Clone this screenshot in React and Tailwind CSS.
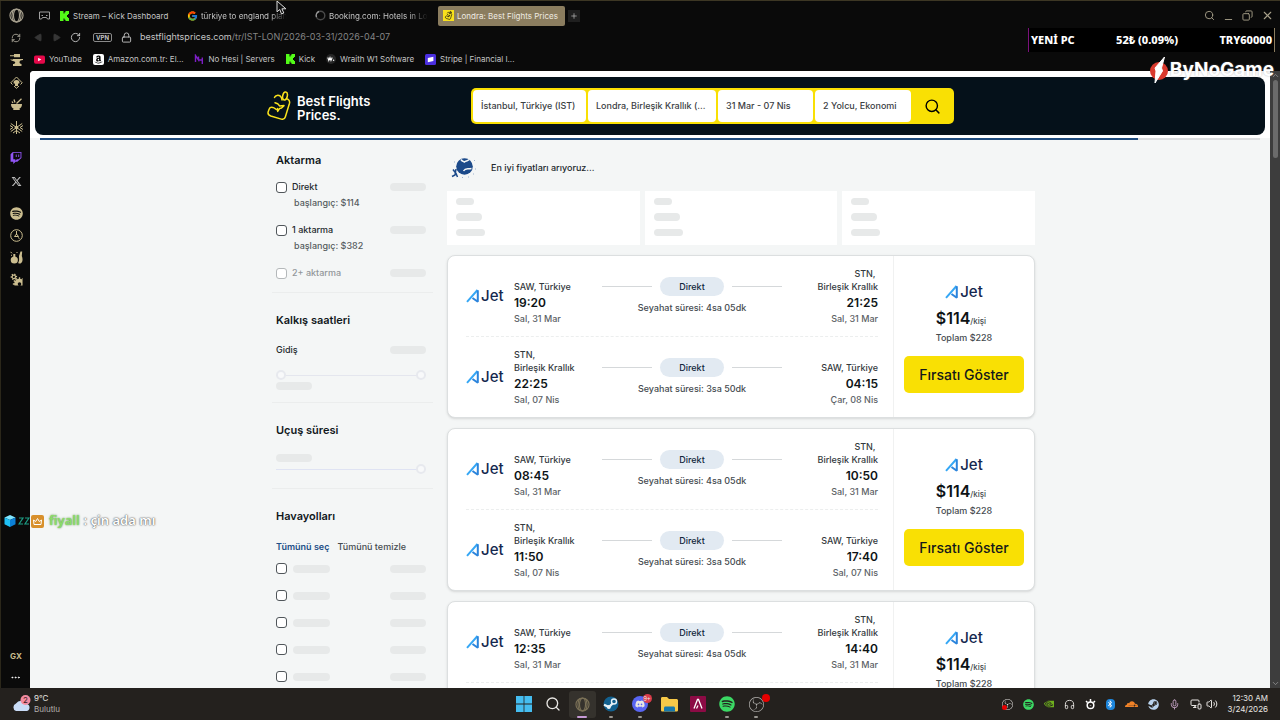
import React from 'react';
import {
  Search,
  RotateCw,
  RefreshCw,
  Lock,
  X,
  Minus,
  Copy,
  Plus,
  Mic,
  Volume2,
  Headphones,
  MonitorSmartphone,
  ChevronUp,
  ChevronDown,
  Play,
  Ellipsis,
} from 'lucide-react';
import {
  FaXTwitter,
  FaSpotify,
  FaTwitch,
  FaSteam,
  FaDiscord,
  FaAmazon,
  FaCloudflare,
  FaBluetoothB,
} from 'react-icons/fa6';
import { FcGoogle } from 'react-icons/fc';
import { SiNvidia, SiObsstudio } from 'react-icons/si';
import { GiGears } from 'react-icons/gi';

const bookmarks = [
  { label: 'YouTube', icon: <YoutubeMark /> },
  { label: 'Amazon.com.tr: El...', icon: <AmazonMark /> },
  { label: 'No Hesi | Servers', icon: <NoHesiMark /> },
  { label: 'Kick', icon: <KickMark /> },
  { label: 'Wraith W1 Software', icon: <WraithMark /> },
  { label: 'Stripe | Financial I...', icon: <StripeMark /> },
];

const tabs = [
  { label: 'Stream – Kick Dashboard', icon: <KickMark /> },
  { label: 'türkiye to england plan', icon: <FcGoogle size={12} />, fade: true },
  { label: 'Booking.com: Hotels in Lo', icon: <Spinner />, fade: true },
  { label: 'Londra: Best Flights Prices', icon: <TagFavicon />, active: true },
];

const stops = [
  { label: 'Direkt', price: 'başlangıç: $114' },
  { label: '1 aktarma', price: 'başlangıç: $382' },
  { label: '2+ aktarma', disabled: true },
];

const saw = ['SAW, Türkiye'];
const stn = ['STN,\u00a0', 'Birleşik Krallık'];

const flights = [
  {
    out: { from: saw, dep: '19:20', depDate: 'Sal, 31 Mar', to: stn, arr: '21:25', arrDate: 'Sal, 31 Mar', time: '4sa 05dk' },
    back: { from: stn, dep: '22:25', depDate: 'Sal, 07 Nis', to: saw, arr: '04:15', arrDate: 'Çar, 08 Nis', time: '3sa 50dk' },
  },
  {
    out: { from: saw, dep: '08:45', depDate: 'Sal, 31 Mar', to: stn, arr: '10:50', arrDate: 'Sal, 31 Mar', time: '4sa 05dk' },
    back: { from: stn, dep: '11:50', depDate: 'Sal, 07 Nis', to: saw, arr: '17:40', arrDate: 'Sal, 07 Nis', time: '3sa 50dk' },
  },
  {
    out: { from: saw, dep: '12:35', depDate: 'Sal, 31 Mar', to: stn, arr: '14:40', arrDate: 'Sal, 31 Mar', time: '4sa 05dk' },
    back: { from: stn, dep: '11:50', depDate: 'Sal, 07 Nis', to: saw, arr: '17:40', arrDate: 'Sal, 07 Nis', time: '3sa 50dk' },
  },
];

/* ---------- small marks ---------- */

function KickMark() {
  return (
    <svg width="9" height="10" viewBox="0 0 9 10" fill="#53fc18">
      <path d="M0 0h3.500v2.500h1V1.200h1V0H9v3H8v1H7v2h1v1h1v3H5.500V8.800h-1V7.500h-1V10H0z" />
    </svg>
  );
}

function YoutubeMark() {
  return (
    <svg width="11" height="9" viewBox="0 0 12 9">
      <rect width="12" height="9" rx="2" fill="#e5094a" />
      <path d="M4.500 2.500v4L8 4.500z" fill="#fff" />
    </svg>
  );
}

function AmazonMark() {
  return (
    <span className="flex size-[11px] items-center justify-center rounded-[2px] bg-white text-black">
      <FaAmazon size={9} />
    </span>
  );
}

function NoHesiMark() {
  return (
    <svg width="10" height="11" viewBox="0 0 10 11" fill="none" stroke="#7c1fc4" strokeWidth="1.400">
      <path d="M1.500 8V1.500l3 4.500V2.500M4.500 6h3.800V3.500M8.300 6v4" />
    </svg>
  );
}

function WraithMark() {
  return (
    <svg width="10" height="10" viewBox="0 0 10 10">
      <circle cx="5" cy="5" r="5" fill="#262626" />
      <path d="M1.800 3.500l1 3 1.200-3 1 3 1.200-3" fill="none" stroke="#fff" strokeWidth="1.100" />
      <circle cx="7.600" cy="6.300" r=".7" fill="#fff" />
    </svg>
  );
}

function StripeMark() {
  return (
    <svg width="11" height="11" viewBox="0 0 11 11">
      <rect width="11" height="11" rx="1.500" fill="#4b2fe0" />
      <path d="M2.800 4l5.600-1.200v4.300L2.800 8.300z" fill="#fff" />
    </svg>
  );
}

function Spinner() {
  return (
    <svg width="11" height="11" viewBox="0 0 11 11" fill="none" strokeWidth="1.400">
      <circle cx="5.500" cy="5.500" r="4.300" stroke="#4a4a4a" />
      <path d="M1.500 7A4.300 4.300 0 0 1 4 1.500" stroke="#999" />
    </svg>
  );
}

function TagShape() {
  return (
    <g fill="none" strokeLinecap="round" strokeLinejoin="round">
      <ellipse cx="18" cy="5" rx="2.300" ry="4" transform="rotate(12 18 5)" />
      <path d="M7.500 6.500C8.500 4 11.500 3.800 13.300 5.200c1 .8 1.500 2.200 1.700 3.800M20.500 8C22.300 9 23 10.300 22.500 12.200L18.300 26c-.6 2-2 2.700-4 2.100L3.800 25C1.600 24.200.6 22.600 1.200 20.700l.9-2.500c.6-1.700 1.900-2.200 3.700-1.800 1.500.4 2.700 1.500 4 2.200" />
      <path d="M8 11.800l2.700 1 2 2.200 4.300-.4-2.500 2.400-1.800.4-2 3-.1-2.900" />
    </g>
  );
}

function TagFavicon() {
  return (
    <svg width="11" height="11" viewBox="0 0 32 32" stroke="#111" strokeWidth="2.200">
      <rect width="32" height="32" fill="#f9e11c" stroke="none" />
      <g transform="translate(6 3) scale(.86)">
        <TagShape />
      </g>
    </svg>
  );
}

function OperaMark({ size, color }) {
  return (
    <svg width={size} height={size} viewBox="0 0 16 16" fill="none" stroke={color} strokeWidth="1.200">
      <circle cx="8" cy="8" r="7" />
      <ellipse cx="8" cy="8" rx="3.200" ry="6.800" />
      <path d="M5 1.800C2.500 5 2.500 11 5 14.200M11 1.800c2.500 3.200 2.500 9.200 0 12.400" />
    </svg>
  );
}

function AJetLogo() {
  return (
    <span className="flex h-4 items-center gap-px text-[#14284f]">
      <svg width="14" height="14" viewBox="0 0 14 14" fill="none">
        <path d="M1 12.800L11.500 1" stroke="#35a7f5" strokeWidth="2" />
        <path d="M11.800 1.200v11.600L6.500 9" stroke="#2b84dc" strokeWidth="2" strokeLinejoin="bevel" />
      </svg>
      <span className="text-[15px] leading-4 font-medium">Jet</span>
    </span>
  );
}

function Globe() {
  return (
    <svg width="26" height="24" viewBox="0 0 26 24">
      <circle cx="13.500" cy="10.500" r="8.300" fill="#1c4a8a" />
      <path d="M10 3.500c1.500 2.500 2.500 1.500 3.500 2.500 1.500-1.500 3-.5 4.500-2.500M12.500 15c2-3.500 4-1.500 8-2.500" fill="none" stroke="#f4f6f6" strokeWidth="1.500" />
      <path d="M1 20.500l3-1.500 1-6M2 13.500l3 4 1.500 3.500" fill="none" stroke="#1c4a8a" strokeWidth="1.500" />
      <path d="M3 6h1M23 4.500h1M24 13h1M22 18h1M17 21h1M11 21.500h1" stroke="#9db3d0" strokeWidth="1.200" />
    </svg>
  );
}

function AnvilIcon() {
  return (
    <svg width="13" height="13" viewBox="0 0 13 13" fill="currentColor">
      <path d="M4 0h6v3.200H4zM0 1.200h4v1H0zM0 5.500h3V5h10v1c-2 0-3.500.8-3.500 2.200 0 1 .8 1.600 2 1.800v2H3v-2c1.500-.2 2.200-.8 2.200-1.600C5.200 7.300 3 7.600 0 5.500z" />
    </svg>
  );
}

function MushroomIcon() {
  return (
    <svg width="13" height="13" viewBox="0 0 13 13" fill="none" stroke="currentColor">
      <path d="M2.500 8.500L.8 6.800 6.500 1l5.700 5.800-1.700 1.700M4 10l2.500 2.300L9 10" />
      <path d="M3.500 7.200a3 3.200 0 0 1 6 0L8 7.800V10H5V7.800z" fill="currentColor" stroke="none" />
    </svg>
  );
}

function MortarIcon() {
  return (
    <svg width="13" height="13" viewBox="0 0 13 13" fill="currentColor">
      <path d="M1 6h11c0 2.500-1 4-2.700 4.800l.7 1.200H3l.7-1.200C2 10 1 8.500 1 6z" />
      <path d="M6.500 5.500L11.500.8M3 5l-1-1.500M5 4.500L4 1.500" stroke="currentColor" strokeWidth="1.300" />
    </svg>
  );
}

function SpiderIcon() {
  return (
    <svg width="13" height="13" viewBox="0 0 13 13" fill="none" stroke="currentColor">
      <path d="M6.500 0v13M.8 2.500l5.700 4 5.700-4M.8 10.500l5.700-4 5.700 4M0 4.500l3 2-3 2M13 4.500l-3 2 3 2M3 12l3.500-2.500L10 12" />
      <circle cx="6.500" cy="6.500" r="1.800" fill="currentColor" stroke="none" />
    </svg>
  );
}

function PotionsIcon() {
  return (
    <svg width="13" height="13" viewBox="0 0 13 13" fill="currentColor">
      <circle cx="4.300" cy="9" r="3.600" />
      <path d="M3.300 3h2v4h-2zM9 5l1.500-4.500h1.700L11.800 5c1.300 3 1 6.500-1.300 7.500-1 .3-1.800 0-2.300-.6C9.500 9.500 9 7.500 9 5z" />
      <path d="M.5.800l1.500 1.500M1 4l1 .5M7.500 1L6.500 2" stroke="currentColor" />
    </svg>
  );
}

/* ---------- browser chrome ---------- */

const Rail = () => (
  <aside className="flex w-[30px] shrink-0 flex-col items-center border-l border-[#2b271a] pt-[3px] pl-px text-[#cbbd8f]">
    <nav className="flex flex-col items-center">
      <button aria-label="Opera" className="flex h-[23px] items-center"><OperaMark size={15} color="#a9a290" /></button>
      <button aria-label="Sync" className="flex h-[22px] items-center text-[#b5b0a2]"><RefreshCw size={10} /></button>
      <button aria-label="Mods" className="flex h-[22px] items-center"><AnvilIcon /></button>
      <button aria-label="Mushroom" className="flex h-[22px] items-center"><MushroomIcon /></button>
      <button aria-label="Mortar" className="flex h-[23px] items-center"><MortarIcon /></button>
      <button aria-label="Spider" className="flex h-[22px] items-center"><SpiderIcon /></button>
    </nav>
    <nav className="mt-2 flex flex-col items-center">
      <button aria-label="Twitch" className="flex h-[24px] items-center text-[#9155f5]"><FaTwitch size={12} /></button>
      <button aria-label="X" className="flex h-[22px] items-center text-[#bdbdbd]"><FaXTwitter size={11} /></button>
    </nav>
    <nav className="mt-2.5 flex flex-col items-center">
      <button aria-label="Spotify" className="flex h-[22px] items-center"><FaSpotify size={13} /></button>
      <button aria-label="History" className="flex h-[22px] items-center">
        <svg width="13" height="13" viewBox="0 0 13 13" fill="none" stroke="currentColor">
          <circle cx="6.500" cy="6.500" r="5.800" />
          <path d="M6.500 2v4M4.500 7.500l2-2.500 2 2.500zM8 8.500l1.500 1" />
        </svg>
      </button>
      <button aria-label="Potions" className="flex h-[22px] items-center"><PotionsIcon /></button>
      <button aria-label="Settings" className="flex h-[22px] items-center"><GiGears size={13} /></button>
    </nav>
    <div className="mt-auto flex flex-col items-center">
      <button className="h-[22px] text-[8px] font-bold">GX</button>
      <button aria-label="More" className="flex h-[21px] items-center text-white"><Ellipsis size={11} /></button>
    </div>
  </aside>
);

const TabRow = () => (
  <div className="flex h-[26px] items-center pt-[3px] pl-[5px] text-[#c4c4c4]">
    <svg className="w-[19px]" width="12" height="10" viewBox="0 0 12 10" fill="none" stroke="#a0a0a0">
      <path d="M1 1h10v7H9L8 6.500H4L3 8H1zM3 4.500h1.500M7.500 4.500H9" />
    </svg>
    <div className="flex gap-px">
      {tabs.map((tab) => (
        <button
          key={tab.label}
          className={`flex h-5 w-[127px] items-center gap-[3px] rounded-[2px] pl-[5px] text-left whitespace-nowrap ${
            tab.active ? 'bg-[#8b7d5f] text-[#efebe2]' : ''
          }`}
        >
          <span className="flex w-[11px] shrink-0 justify-center">{tab.icon}</span>
          <span className={tab.fade ? 'mask-r-from-80%' : ''}>{tab.label}</span>
        </button>
      ))}
    </div>
    <button aria-label="New tab" className="ml-[3px] flex size-3 items-center justify-center bg-[#1f1f1f]">
      <Plus size={8} />
    </button>
    <div className="ml-auto flex items-center gap-2 pr-[6px] text-[#a8a18a]">
      <button aria-label="Search tabs"><Search size={11} /></button>
      <button aria-label="Minimize" className="pt-2"><Minus size={11} /></button>
      <button aria-label="Restore"><Copy size={11} className="-scale-x-100" /></button>
      <button aria-label="Close"><X size={13} /></button>
    </div>
  </div>
);

const AddressRow = () => (
  <div className="flex h-[20px] items-center pl-1 text-[#c4c4c4]">
    <button aria-label="Back" className="w-[18px] text-[#363636]"><Play size={9} className="-scale-x-100 fill-current" /></button>
    <button aria-label="Forward" className="w-[18px] text-[#363636]"><Play size={9} className="fill-current" /></button>
    <button aria-label="Reload" className="w-[23px]"><RotateCw size={11} /></button>
    <span className="flex h-[9px] w-[19px] items-center justify-center rounded-[2px] border border-[#8a8a8a] text-[6px] font-bold">VPN</span>
    <Lock size={11} className="mr-2 ml-[9px]" />
    <button className="text-[9px]">
      bestflightsprices.com<span className="text-[#858585]">/tr/IST-LON/2026-03-31/2026-04-07</span>
    </button>
  </div>
);

const BookmarkRow = () => (
  <nav className="flex h-6 items-center gap-[11px] pl-1 text-[#c4c4c4]">
    {bookmarks.map((b) => (
      <a key={b.label} href="#" className="flex items-center gap-1 whitespace-nowrap">
        {b.icon}
        {b.label}
      </a>
    ))}
  </nav>
);

/* ---------- web page ---------- */

const Bone = ({ className }) => (
  <span className={`block rounded-full bg-[#e7e9e9] ${className}`} />
);

const SearchBar = () => (
  <form className="flex h-9 w-[483px] items-stretch gap-[2px] rounded-[5px] bg-[#f9e004] p-[2px] text-[9px] font-medium text-[#3b4043]">
    <input aria-label="Nereden" defaultValue="İstanbul, Türkiye (IST)" className="w-[113px] rounded-[4px] bg-white px-2" />
    <input aria-label="Nereye" defaultValue="Londra, Birleşik Krallık (..." className="w-[128px] rounded-[4px] bg-white px-2" />
    <button type="button" className="w-[95px] rounded-[4px] bg-white px-2 text-left">31 Mar - 07 Nis</button>
    <button type="button" className="w-[96px] rounded-[4px] bg-white px-2 text-left whitespace-nowrap">2 Yolcu, Ekonomi</button>
    <button type="button" aria-label="Ara" className="flex flex-1 items-center justify-center text-black">
      <Search size={17} />
    </button>
  </form>
);

const SiteHeader = () => (
  <header className="bg-white px-[5px] pt-1.5 pb-[3px]">
    <div className="flex h-[58px] items-center rounded-lg bg-[#05111a]">
      <div className="mx-auto flex w-full max-w-[770px] items-center">
        <a href="#" className="flex w-[206px] items-center gap-1.5 pl-0.5">
          <svg width="24" height="30" viewBox="0 0 24 30" stroke="#f9e11c" strokeWidth="1.500">
            <TagShape />
          </svg>
          <span className="pt-1 text-[13px] leading-[14px] font-semibold text-white">
            Best Flights
            <br />
            Prices.
          </span>
        </a>
        <SearchBar />
      </div>
    </div>
  </header>
);

const checkboxClass =
  'size-[11px] shrink-0 appearance-none rounded-[3px] border border-[#50565a] bg-white disabled:border-[#b4b8ba]';

const thumbClass =
  'absolute inset-0 h-[10px] w-full appearance-none bg-transparent [&::-webkit-slider-thumb]:size-[10px] [&::-webkit-slider-thumb]:appearance-none [&::-webkit-slider-thumb]:rounded-full [&::-webkit-slider-thumb]:border-2 [&::-webkit-slider-thumb]:border-[#e7e9ee] [&::-webkit-slider-thumb]:bg-[#f8f9fa]';

const Section = ({ title, className, children }) => (
  <section className={`pl-1 ${className}`}>
    <h2 className="text-[11px] leading-4 font-semibold text-[#11181c]">{title}</h2>
    {children}
  </section>
);

const Filters = () => (
  <aside className="ml-[7px] w-[161px] shrink-0 text-[9px] leading-4 font-medium text-[#23292d]">
    <Section title="Aktarma" className="h-[153px] border-b border-[#ebeded] pt-3">
      <ul className="mt-[11px]">
        {stops.map((s, i) => (
          <li key={s.label} className="h-[43px]">
            <div className="flex items-center gap-[5px]">
              <input id={`stop-${i}`} type="checkbox" disabled={s.disabled} className={checkboxClass} />
              <label htmlFor={`stop-${i}`} className={s.disabled ? 'text-[#92979a]' : ''}>{s.label}</label>
              <Bone className="mr-[7px] ml-auto h-2 w-9" />
            </div>
            {s.price && <p className="pl-[18px] text-[#565c60]">{s.price}</p>}
          </li>
        ))}
      </ul>
    </Section>

    <Section title="Kalkış saatleri" className="h-[110px] border-b border-[#ebeded] pt-[19px]">
      <div className="mt-[14px] flex items-center justify-between pr-[7px]">
        <span>Gidiş</span>
        <Bone className="h-2 w-9" />
      </div>
      <div className="relative mt-3 mr-[7px] flex h-[10px] items-center">
        <span className="h-px w-full bg-[#e4e6ee]" />
        <input aria-label="En erken gidiş" type="range" defaultValue={0} className={thumbClass} />
        <input aria-label="En geç gidiş" type="range" defaultValue={100} className={thumbClass} />
      </div>
      <Bone className="mt-0.5 h-2 w-9" />
    </Section>

    <Section title="Uçuş süresi" className="h-[86px] border-b border-[#ebeded] pt-[19px]">
      <Bone className="mt-4 h-2 w-9" />
      <div className="relative mt-0.5 mr-[7px] flex h-[10px] items-center">
        <span className="h-px w-full bg-[#dfe3f3]" />
        <input aria-label="En uzun uçuş" type="range" defaultValue={100} className={thumbClass} />
      </div>
    </Section>

    <Section title="Havayolları" className="pt-[19px]">
      <div className="mt-[15px] flex gap-2">
        <button className="font-semibold text-[#224f87]">Tümünü seç</button>
        <button className="text-[#454b4f]">Tümünü temizle</button>
      </div>
      <ul>
        {[1, 2, 3, 4, 5].map((n) => (
          <li key={n} className="flex h-[27px] items-center">
            <input aria-label={`Havayolu ${n}`} type="checkbox" className={checkboxClass} />
            <Bone className="ml-1.5 h-2 w-[37px]" />
            <Bone className="mr-[7px] ml-auto h-2 w-9" />
          </li>
        ))}
      </ul>
    </Section>
  </aside>
);

const Stop = ({ place, time, date, right }) => (
  <div className={`flex flex-col justify-end text-[9px] leading-[13px] font-medium text-[#33393d] ${right ? 'w-[88px] items-end' : 'w-[80px]'}`}>
    {place.map((line) => (
      <span key={line}>{line}</span>
    ))}
    <strong className="text-[12px] leading-[19px] font-semibold text-[#0d1316]">{time}</strong>
    <span className="text-[#5c6266]">{date}</span>
  </div>
);

const Leg = ({ leg }) => (
  <div className="flex h-20 justify-between pt-[10px] pb-[11px]">
    <div className="flex gap-[9px]">
      <div className="flex w-[39px] items-center">
        <AJetLogo />
      </div>
      <Stop place={leg.from} time={leg.dep} date={leg.depDate} />
    </div>
    <div className="flex w-[180px] flex-col items-center justify-end pb-[11px] text-[9px] leading-3 font-medium text-[#454b4f]">
      <div className="flex w-full items-center gap-2">
        <span className="h-px flex-1 bg-[#d5d8da]" />
        <span className="flex h-[19px] w-16 items-center justify-center rounded-full bg-[#e2eaf2] text-[#12273d]">Direkt</span>
        <span className="h-px flex-1 bg-[#d5d8da]" />
      </div>
      <span className="mt-1.5">Seyahat süresi: {leg.time}</span>
    </div>
    <Stop right place={leg.to} time={leg.arr} date={leg.arrDate} />
  </div>
);

const FlightCard = ({ flight }) => (
  <article className="flex rounded-lg border border-[#dcdfe0] bg-white shadow-sm">
    <div className="flex-1 pr-[15px] pl-[18px]">
      <Leg leg={flight.out} />
      <div className="border-t border-dashed border-[#eceeee]" />
      <Leg leg={flight.back} />
    </div>
    <div className="flex w-[141px] flex-col items-center border-l border-[#f0f1f1] px-[10px] pt-7">
      <AJetLogo />
      <div className="mt-2 text-[9px] font-medium text-[#454b4f]">
        <p className="flex items-baseline text-[8px] leading-5">
          <strong className="text-[16px] font-semibold text-[#0d1316]">$114</strong>/kişi
        </p>
        <p className="leading-[14px]">Toplam $228</p>
      </div>
      <button className="mt-[11px] h-[37px] w-full rounded-[5px] bg-[#f9e004] text-[14px] font-medium whitespace-nowrap text-[#14181a]">
        Fırsatı Göster
      </button>
    </div>
  </article>
);

const Results = () => (
  <div className="min-w-0 flex-1">
    <div className="flex h-[51px] items-center gap-[14px] pt-1 pl-1 text-[9px] font-medium text-[#23292d]">
      <Globe />
      <p>En iyi fiyatları arıyoruz...</p>
    </div>
    <div className="grid grid-cols-3 gap-[5px]">
      {[1, 2, 3].map((n) => (
        <div key={n} className="flex h-[54px] flex-col gap-2 bg-white pt-[7px] pl-[9px]">
          <Bone className="h-[7px] w-[18px]" />
          <Bone className="h-2 w-[26px]" />
          <Bone className="h-[7px] w-[29px]" />
        </div>
      ))}
    </div>
    <div className="mt-[10px] flex flex-col gap-[10px]">
      {flights.map((f) => (
        <FlightCard key={f.out.dep} flight={f} />
      ))}
    </div>
  </div>
);

const Scrollbar = () => (
  <div className="flex w-[10px] shrink-0 flex-col items-center bg-[#3d3d3d] text-[#9a9a9a]">
    <ChevronUp size={9} />
    <span className="h-[78px] w-[5px] rounded-full bg-[#6b6b6b]" />
    <ChevronDown size={9} className="mt-auto" />
  </div>
);

/* ---------- stream overlays ---------- */

const Overlays = () => (
  <div className="pointer-events-none">
    <svg className="absolute top-0 left-[276px]" width="11" height="14" viewBox="0 0 11 14">
      <path d="M1 0v10.800l2.800-2.300L5.500 13l2.300-1-1.900-4.200h4z" fill="#111" stroke="#ddd" />
    </svg>

    <div className="absolute top-[27px] right-[5px] flex h-6 w-[247px] items-center justify-between border-x border-r-[#8b7d5f] border-l-[#7b117b] bg-black px-[2px] font-['Noto_Sans'] text-[11px] font-extrabold text-white">
      <span>YENİ PC</span>
      <span>52₺ (0.09%)</span>
      <span>TRY60000</span>
    </div>

    <div className="absolute top-[55px] right-[6px] flex items-center gap-px text-[19px] leading-7 font-bold text-white">
      <svg width="20" height="26" viewBox="0 0 20 26">
        <circle cx="10" cy="14" r="9" fill="#d93a2e" />
        <path d="M15.500 0L6 11l1 3-1 12 7.500-12-1-3z" fill="#fff" stroke="#fff" />
      </svg>
      <span className="text-shadow-[0_0_2px_#8889]">ByNoGame</span>
    </div>

    <div className="absolute top-[511px] left-1 flex h-[18px] items-center font-['Noto_Sans'] text-[13px] font-semibold">
      <svg width="12" height="12" viewBox="0 0 12 12">
        <path d="M6 0l5.500 2.500L6 5 .5 2.500z" fill="#7fe6ff" />
        <path d="M.5 2.500L6 5v7L.5 9.300z" fill="#1fc0f5" />
        <path d="M11.500 2.500L6 5v7l5.500-2.700z" fill="#0b7fd6" />
      </svg>
      <svg className="ml-0.5" width="12" height="10" viewBox="0 0 12 10" fill="none" stroke="#1d9c84" strokeWidth="1.200">
        <path d="M1 2h4L1 8h4M7 2h4L7 8h4" />
      </svg>
      <svg className="ml-px" width="13" height="13" viewBox="0 0 13 13">
        <rect width="13" height="13" rx="2" fill="#d8902c" />
        <path d="M3 9.500L2.500 5l2.200 1.500L6.500 3.500l1.800 3L10.500 5 10 9.500z" fill="none" stroke="#fff" />
      </svg>
      <span className="ml-[5px] text-[#8bdc6a] text-shadow-[0_0_2px_#3f7d2a]">fiyall</span>
      <span className="ml-1 text-white text-shadow-[0_0_2px_#555,0_0_1px_#555]">: çin ada mı</span>
    </div>
  </div>
);

/* ---------- windows taskbar ---------- */

const Task = ({ label, open, active, children }) => (
  <button
    aria-label={label}
    className={`relative flex h-[27px] w-[27px] items-center justify-center rounded-[3px] ${active ? 'bg-[#35322d]' : ''}`}
  >
    {children}
    {(open || active) && (
      <span className={`absolute bottom-0 h-[2px] rounded-full ${active ? 'w-[10px] bg-[#c79ad6]' : 'w-1 bg-[#9a9792]'}`} />
    )}
  </button>
);

const Taskbar = () => (
  <footer className="grid h-8 shrink-0 grid-cols-[1fr_auto_1fr] items-center bg-[#24211e] text-[8px] leading-[11px] text-[#e8e6e3]">
    <div className="flex items-center gap-[3px] pl-3">
      <svg width="19" height="18" viewBox="0 0 19 18">
        <path d="M4 16a4 4 0 0 1 0-7.500A6 6 0 0 1 14.500 9 3.600 3.600 0 0 1 15 16z" fill="#c9dcf7" />
        <circle cx="13.500" cy="5" r="5" fill="#f28ba0" />
        <text x="13.500" y="7.800" fontSize="8" textAnchor="middle" fill="#3a1a22">2</text>
      </svg>
      <div>
        <p>9°C</p>
        <p className="text-[#b5b2ae]">Bulutlu</p>
      </div>
    </div>
    <nav className="flex gap-[2px]">
      <Task label="Start">
        <svg width="16" height="16" viewBox="0 0 16 16" fill="#45bdf0">
          <path d="M0 0h7.600v7.600H0zM8.400 0H16v7.600H8.400zM0 8.400h7.600V16H0zM8.400 8.400H16V16H8.400z" />
        </svg>
      </Task>
      <Task label="Search"><Search size={16} /></Task>
      <Task label="Opera GX" active><OperaMark size={15} color="#7c7258" /></Task>
      <Task label="Steam" open>
        <svg width="16" height="16" viewBox="0 0 16 16">
          <circle cx="8" cy="8" r="7.500" fill="#12608f" />
          <path d="M1 8.800l5 2.300 4.500-4.600" fill="none" stroke="#e8f2f8" strokeWidth="2.200" />
          <circle cx="11" cy="5.500" r="2.500" fill="#12608f" stroke="#e8f2f8" strokeWidth="1.400" />
          <circle cx="5.800" cy="11" r="2" fill="#e8f2f8" />
        </svg>
      </Task>
      <Task label="Discord" open>
        <span className="flex size-4 items-center justify-center rounded-full bg-[#5865f2]"><FaDiscord size={10} /></span>
        <span className="absolute top-[3px] right-0.5 flex size-[9px] items-center justify-center rounded-full bg-[#d93b4b] text-[6px]">9+</span>
      </Task>
      <Task label="Explorer">
        <svg width="17" height="15" viewBox="0 0 17 15">
          <path d="M0 1.500C0 .7.500 0 1.400 0H6l2 2h7.500c.8 0 1.500.7 1.500 1.500V13c0 1-.6 1.500-1.500 1.500h-14C.6 14.500 0 14 0 13z" fill="#f7c948" />
          <path d="M3 14.500V11c0-.8.600-1.500 1.500-1.500h8c.9 0 1.500.7 1.500 1.500v3.500z" fill="#1779ad" />
        </svg>
      </Task>
      <Task label="App">
        <svg width="16" height="16" viewBox="0 0 16 16">
          <rect width="16" height="16" rx="1" fill="#8c0b45" />
          <path d="M4 12.500l3.500-9h1l3.500 9M6.500 12.500L8 9.500" fill="none" stroke="#fff" strokeWidth="1.300" />
        </svg>
      </Task>
      <Task label="Spotify" open><FaSpotify size={16} className="text-[#3bd864]" /></Task>
      <Task label="OBS" open>
        <SiObsstudio size={15} className="text-[#b3b1ae]" />
        <span className="absolute top-[3px] right-0 size-2 rounded-full bg-[#e60000]" />
      </Task>
    </nav>
    <div className="flex items-center justify-end gap-[10px] pr-3">
      <span className="relative">
        <SiObsstudio size={11} />
        <span className="absolute bottom-0 left-0 size-[5px] rounded-full bg-[#e60000]" />
      </span>
      <FaSpotify size={11} className="text-[#3bd864]" />
      <SiNvidia size={10} className="text-[#6fb01e]" />
      <Headphones size={11} />
      <svg width="11" height="11" viewBox="0 0 11 11" fill="none" stroke="#fff" strokeWidth="1.500">
        <circle cx="5.500" cy="6.200" r="3.300" />
        <path d="M5.500 0v3M1 2l1.500 1.500M10 2L8.500 3.500M5.500 6.200v.5" />
      </svg>
      <span className="flex h-[11px] w-[9px] items-center justify-center rounded-[4px] bg-[#1d86dc] text-white"><FaBluetoothB size={8} /></span>
      <FaCloudflare size={13} className="text-[#f08228]" />
      <FaSteam size={11} className="text-[#b9d3ee]" />
      <Mic size={11} className="text-[#c9a6c9]" />
      <span className="flex gap-1">
        <MonitorSmartphone size={12} />
        <Volume2 size={12} />
      </span>
      <div className="text-right whitespace-nowrap">
        <p>12:30 AM</p>
        <p>3/24/2026</p>
      </div>
    </div>
  </footer>
);

const App = () => {
  return (
    <div className="relative flex h-screen flex-col overflow-hidden border-t border-[#3d3724] bg-[#0a0a0a] font-[Inter,sans-serif] text-[8px]">
      <div className="flex min-h-0 flex-1">
        <Rail />
        <div className="flex min-w-0 flex-1 flex-col">
          <TabRow />
          <AddressRow />
          <BookmarkRow />
          <div className="flex min-h-0 flex-1">
            <main className="flex min-w-0 flex-1 flex-col overflow-hidden rounded-tl bg-[#f4f6f6]">
              <SiteHeader />
              <div className="mx-[10px] h-[2px] shrink-0 bg-[#dadcde]">
                <div className="h-full w-[90%] bg-[#1d4a7c]" />
              </div>
              <div className="mx-auto flex w-full max-w-[770px] gap-[14px]">
                <Filters />
                <Results />
              </div>
            </main>
            <Scrollbar />
          </div>
        </div>
      </div>
      <Taskbar />
      <Overlays />
    </div>
  );
};

export default App;
